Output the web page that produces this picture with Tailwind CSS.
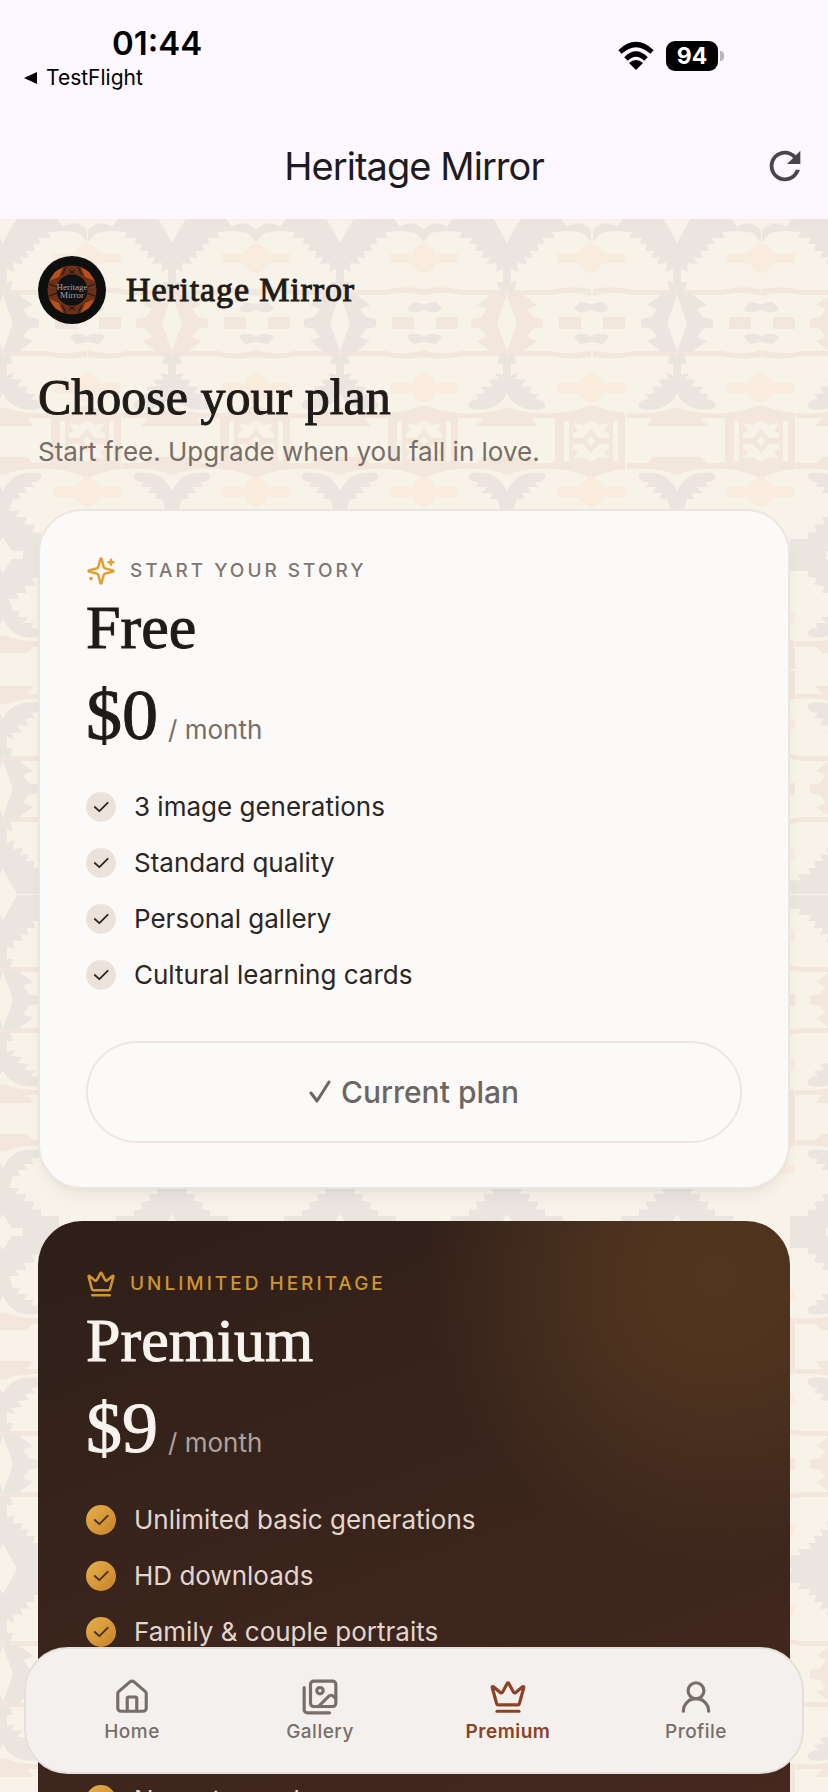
<!DOCTYPE html>
<html lang="en">
<head>
<meta charset="utf-8">
<meta name="viewport" content="width=device-width, initial-scale=1">
<title>Heritage Mirror</title>
<script src="https://cdn.jsdelivr.net/npm/@tailwindcss/browser@4"></script>
</head>
<body class="h-screen overflow-hidden bg-[#f8f3e8] font-['Inter',sans-serif] text-[#1f1b18]">
<svg class="absolute h-0 w-0" aria-hidden="true">
  <defs>
    <!-- diamond row: jagged flanks take the column's own colour -->
    <g id="flank">
      <path fill="#f3e7dd" d="M-84 27 Q-65 33 -45 28 H45 Q65 33 84 27 V34 Q65 38 45 33 H-45 Q-65 38 -84 34Z"/>
      <path fill="currentColor" d="M-15 29 L-30 18 L-20 14 L-26 6 L-36 4 L-36 0 H36 V4 L26 6 L20 14 L30 18 L15 29Z"/>
      <path fill="#f8f3e8" d="M-10 0 L0 28 L10 0Z"/>
    </g>
    <g id="medal-a">
      <path fill="#eae5df" d="M67 14 Q72 8 84 13 Q96 8 102 14 L96 21 L84 19 L73 21Z"/>
      <path fill="#f3e7dd" d="M52 0 H74 V6 H52Z M96 0 H118 V6 H96Z"/>
    </g>
    <!-- diamond row down to box row -->
    <g id="half-a">
      <use href="#flank"/>
      <use href="#medal-a"/>
      <path fill="#eae5df" d="M-5 27 L-10 41 H-4 V52 L-12 50 L-8 56 L-19 57 L-14 63 L-26 64 L-22 70 L-32 71 L-28 76 Q-40 77 -38 84 Q-36 88 -20 86 Q-5 82 0 70 Q5 82 20 86 Q36 88 38 84 Q40 77 28 76 L32 71 L22 70 L26 64 L14 63 L19 57 L8 56 L12 50 L4 52 V41 H10 L5 27 L0 34Z"/>
      <path fill="#f9ecdf" d="M50 60 H72 Q76 52 84 49 Q92 52 96 60 H118 V70 H96 Q92 78 84 80 Q76 78 72 70 H50Z"/>
      <path fill="#f3e7dd" d="M-50 90 Q-20 92 0 84 Q20 92 50 90 Q68 88 84 82 Q100 88 118 90 V118 H111 V98 H106 V118 H102 V110 L97 108 L102 100 L92 102 L84 97 L76 102 L66 100 L71 108 L66 110 V118 H62 V98 H57 V118 H48 V95 H24 L31 103 H-31 L-24 95 H-50Z"/>
      <path fill="#f3e7dd" d="M66 118 V115 H76 L84 106 L92 115 H102 V118 H88 L84 113 L80 118Z"/>
    </g>
    <!-- box row down to arrow row -->
    <g id="half-c">
      <path fill="#f3e7dd" d="M-50 28 Q-20 26 0 34 Q20 26 50 28 Q68 30 84 37 Q100 30 118 28 V0 H111 V20 H106 V0 H102 V8 L97 10 L102 18 L92 16 L84 21 L76 16 L66 18 L71 10 L66 8 V0 H62 V20 H57 V0 H48 V22 H30 L24 16 H-24 L-30 22 H-50Z"/>
      <path fill="#f3e7dd" d="M66 0 V3 H76 L84 12 L92 3 H102 V0 H88 L84 5 L80 0Z"/>
      <path fill="#eae5df" d="M0 50 Q8 34 22 32 Q40 30 38 36 Q38 41 28 41 L31 46 L20 46 L25 52 L15 52 L17 58 L10 58 L6 70 L16 70 L13 76 L24 76 L21 83 L32 84 L29 91 L38 92 V98 H56 V115 H-56 V98 H-38 V92 L-29 91 L-32 84 L-21 83 L-24 76 L-13 76 L-16 70 L-6 70 L-10 58 L-17 58 L-15 52 L-25 52 L-20 46 L-31 46 L-28 41 Q-38 41 -38 36 Q-40 30 -22 32 Q-8 34 0 50Z"/>
      <path fill="#f9ecdf" d="M50 46 H72 Q76 38 84 35 Q92 38 96 46 H118 V56 H96 Q92 64 84 66 Q76 64 72 56 H50Z"/>
      <path fill="#f8f3e8" d="M-20 115 V110 H-9 L0 96 L9 110 H20 V115Z"/>
    </g>
    <!-- diamond row down to arrow row -->
    <g id="half-b">
      <use href="#flank"/>
      <use href="#medal-a"/>
      <path fill="#f9ecdf" d="M50 60 H72 Q76 52 84 49 Q92 52 96 60 H118 V70 H96 Q92 78 84 80 Q76 78 72 70 H50Z"/>
      <path fill="#eae5df" d="M-5 27 L-10 41 H-4 V54 L-11 51 L-10 60 L-20 59 L-17 66 L-26 65 L-23 72 L-32 72 L-30 79 L-38 79 L-35 85 L-48 85 L-45 91 L-62 92 L-76 90 L-84 81 V93 Q-72 105 -60 96 L-54 105 H-14 L0 80 L14 105 H54 L60 96 Q72 105 84 93 V81 L76 90 L62 92 L45 91 L48 85 L35 85 L38 79 L30 79 L32 72 L23 72 L26 65 L17 66 L20 59 L10 60 L11 51 L4 54 V41 H10 L5 27 L0 34Z"/>
    </g>
    <g id="column">
      <use href="#half-b" transform="translate(0 104) scale(1 -1)"/>
      <use href="#half-a" transform="translate(0 104)"/>
      <use href="#half-c" transform="translate(0 222)"/>
      <use href="#half-c" transform="translate(0 450) scale(1 -1)"/>
      <use href="#half-a" transform="translate(0 570) scale(1 -1)"/>
      <use href="#half-b" transform="translate(0 570)"/>
      <use href="#half-b" transform="translate(0 781) scale(1 -1)"/>
      <use href="#half-a" transform="translate(0 781)"/>
      <use href="#half-c" transform="translate(0 899)"/>
      <use href="#half-c" transform="translate(0 1127) scale(1 -1)"/>
      <use href="#half-a" transform="translate(0 1245) scale(1 -1)"/>
      <use href="#half-b" transform="translate(0 1245)"/>
      <use href="#half-b" transform="translate(0 1455) scale(1 -1)"/>
      <use href="#half-a" transform="translate(0 1455)"/>
    </g>
    <symbol id="tick" viewBox="0 0 24 24"><path d="M20 7 10 17 4.500 12" fill="none" stroke="currentColor" stroke-width="2.200" stroke-linecap="round" stroke-linejoin="round"/></symbol>
    <symbol id="crown" viewBox="0 0 24 24"><path d="M11.562 3.266a.5.5 0 0 1 .876 0L15.390 8.870a1 1 0 0 0 1.516.294L21.183 5.500a.5.5 0 0 1 .798.519l-2.834 10.246a1 1 0 0 1-.956.734H5.810a1 1 0 0 1-.957-.734L2.020 6.020a.5.5 0 0 1 .798-.519l4.276 3.664a1 1 0 0 0 1.516-.294z M5 21h14" fill="none" stroke="currentColor" stroke-width="2" stroke-linecap="round" stroke-linejoin="round"/></symbol>
  </defs>
</svg>

<div class="flex h-full flex-col">
  <header class="bg-[#fdf7ff]">
    <div class="flex h-24 items-start justify-between pl-6 pr-[104px] pt-6 text-black">
      <div>
        <div class="pl-[88px] text-[33px]/[38px] font-semibold">01:44</div>
        <a href="#" class="flex items-center gap-2 text-[21px]/[32px]">
          <svg class="h-3.5 w-3.5" viewBox="0 0 14 14"><path d="M13 1v12L0 7z"/></svg>TestFlight</a>
      </div>
      <div class="flex items-center gap-3 pt-4">
        <svg class="h-8 w-9" viewBox="0 0 36 32" fill="none" stroke="#000" stroke-width="5"><path d="M2 12 Q18 -3 34 12"/><path d="M8 19 Q18 9 28 19"/><path d="M18 30 L11 23 Q18 17 25 23Z" fill="#000" stroke="none"/></svg>
        <div class="flex items-center gap-0.5">
          <span class="flex h-[30px] w-[52px] items-center justify-center rounded-[9px] bg-black text-[23px]/[30px] font-bold text-white">94</span>
          <span class="h-2.5 w-1 rounded-r-full bg-[#b8b4ba]"></span>
        </div>
      </div>
    </div>
    <div class="grid h-[123px] grid-cols-[1fr_auto_1fr] items-center px-6 pt-4">
      <h1 class="col-start-2 text-[38px]/[48px] tracking-tight text-[#1d1b20]">Heritage Mirror</h1>
      <button aria-label="Refresh" class="-mr-1 justify-self-end text-[#49454f]"><svg class="size-[46px]" viewBox="0 0 24 24" fill="currentColor"><path d="M17.650 6.350C16.200 4.900 14.210 4 12 4c-4.420 0-7.990 3.580-7.990 8s3.570 8 7.990 8c3.730 0 6.840-2.550 7.730-6h-2.080c-.82 2.330-3.040 4-5.650 4-3.310 0-6-2.690-6-6s2.690-6 6-6c1.660 0 3.140.69 4.220 1.780L13 11h7V4l-2.350 2.350z"/></svg></button>
    </div>
  </header>

  <main class="relative min-h-0 flex-1 overflow-hidden">
    <svg class="absolute inset-0 h-full w-full" aria-hidden="true">
      <g class="text-[#eae5df]"><use href="#column" x="-166"/><use href="#column" x="3"/><use href="#column" x="340"/><use href="#column" x="677"/></g>
      <g class="text-[#f3e7dd]"><use href="#column" x="172"/><use href="#column" x="507"/><use href="#column" x="846"/></g>
    </svg>
    <div class="relative px-[38px] pt-9">
      <div class="flex items-center gap-[18px]">
        <svg class="h-[70px] w-[70px]" viewBox="0 0 70 70">
          <circle cx="34" cy="35" r="34" fill="#0f0e0e"/>
          <circle cx="34" cy="35" r="20" fill="none" stroke="#6b3019" stroke-width="9"/>
          <g fill="#b8511d"><path d="M25 12 17 17 11 26 21 22ZM43 12 51 17 57 26 47 22ZM25 58 17 53 11 44 21 48ZM43 58 51 53 57 44 47 48Z"/></g>
          <g fill="none" stroke="#1c1210"><path d="M28 12 24 20M40 12 44 20M28 58 24 50M40 58 44 50M11 29 19 32M11 41 19 38M57 29 49 32M57 41 49 38M31 15l6 4M37 15l-6 4M31 51l6 4M37 51l-6 4"/></g>
          <circle cx="34" cy="35" r="15" fill="#0f1114"/>
          <g fill="#a5a4a8" font-family="Liberation Serif, serif" font-size="9" text-anchor="middle"><text x="34" y="35">Heritage</text><text x="34" y="43">Mirror</text></g>
        </svg>
        <span class="font-['Liberation_Serif',serif] text-[34px]/[44px] tracking-wide [-webkit-text-stroke:1px]">Heritage Mirror</span>
      </div>
      <h2 class="mt-10 font-['Liberation_Serif',serif] text-[50px]/[64px] [-webkit-text-stroke:1px]">Choose your plan</h2>
      <p class="mt-[5px] text-[26px]/[36px] text-[#776e67]">Start free. Upgrade when you fall in love.</p>

      <section class="mt-[39px] rounded-[44px] border-2 border-[#ece6e0] bg-[#fcfaf9] px-[46px] pb-11 pt-11 shadow-lg shadow-black/5">
        <div class="flex items-center gap-3.5 text-[19px]/[32px] font-medium tracking-[3px] text-[#80776f]">
          <svg class="h-[30px] w-[30px] text-[#dfa136]" viewBox="0 0 24 24" fill="none" stroke="currentColor" stroke-width="2" stroke-linecap="round" stroke-linejoin="round"><path d="M9.937 15.500A2 2 0 0 0 8.500 14.063l-6.135-1.582a.5.5 0 0 1 0-.962L8.500 9.936A2 2 0 0 0 9.937 8.500l1.582-6.135a.5.5 0 0 1 .963 0L14.063 8.500A2 2 0 0 0 15.500 9.937l6.135 1.581a.5.5 0 0 1 0 .964L15.500 14.063a2 2 0 0 0-1.437 1.437l-1.582 6.135a.5.5 0 0 1-.963 0z"/><path d="M20 3v4M22 5h-4M4 17.500v1M4.500 18h-1"/></svg>
          START YOUR STORY</div>
        <h3 class="mt-1.5 font-['Liberation_Serif',serif] text-[62px]/[68px] [-webkit-text-stroke:1px]">Free</h3>
        <p class="mt-2.5 flex items-baseline gap-2.5"><span class="font-['Liberation_Serif',serif] text-[72px]/[88px] [-webkit-text-stroke:1px]">$0</span><span class="text-[26px] text-[#776e67]">/ month</span></p>
        <ul class="mt-[30px] space-y-5 text-[26px]/[36px] text-[#2a2624]">
          <li class="flex items-center gap-[18px]"><span class="grid size-[30px] place-items-center rounded-full bg-[#ebe2da]"><svg class="size-5"><use href="#tick"/></svg></span>3 image generations</li>
          <li class="flex items-center gap-[18px]"><span class="grid size-[30px] place-items-center rounded-full bg-[#ebe2da]"><svg class="size-5"><use href="#tick"/></svg></span>Standard quality</li>
          <li class="flex items-center gap-[18px]"><span class="grid size-[30px] place-items-center rounded-full bg-[#ebe2da]"><svg class="size-5"><use href="#tick"/></svg></span>Personal gallery</li>
          <li class="flex items-center gap-[18px]"><span class="grid size-[30px] place-items-center rounded-full bg-[#ebe2da]"><svg class="size-5"><use href="#tick"/></svg></span>Cultural learning cards</li>
        </ul>
        <button class="mt-12 flex h-[102px] w-full items-center justify-center gap-2.5 rounded-full border-2 border-[#efe5e1] text-[30px] font-medium text-[#6b6662]"><svg class="h-6 w-[22px]" viewBox="0 0 22 24" fill="none" stroke="currentColor" stroke-width="3" stroke-linecap="round" stroke-linejoin="round"><path d="M2 13 8 21 20 2"/></svg>Current plan</button>
      </section>

      <section class="mt-8 rounded-[44px] bg-[radial-gradient(circle_at_90%_8%,#52361f_0,#52361fcc_110px,#52361f00_290px),linear-gradient(160deg,#2e1f19_0%,#38241c_40%,#48291f_100%)] px-12 pb-20 pt-[47px] text-[#f8f3ee]">
        <div class="flex items-center gap-3.5 text-[19px]/[32px] font-medium tracking-[3px] text-[#d0952f]">
          <svg class="size-[30px]"><use href="#crown"/></svg>UNLIMITED HERITAGE</div>
        <h3 class="mt-1.5 font-['Liberation_Serif',serif] text-[62px]/[68px] [-webkit-text-stroke:1px]">Premium</h3>
        <p class="mt-2.5 flex items-baseline gap-2.5"><span class="font-['Liberation_Serif',serif] text-[72px]/[88px] [-webkit-text-stroke:1px]">$9</span><span class="text-[26px] text-[#aea29b]">/ month</span></p>
        <ul class="mt-[30px] space-y-5 text-[26px]/[36px] text-[#e2d7ce]">
          <li class="flex items-center gap-[18px]"><span class="grid size-[30px] place-items-center rounded-full bg-linear-to-br from-[#e8b04a] to-[#c5832a] text-[#4a2c18]"><svg class="size-5"><use href="#tick"/></svg></span>Unlimited basic generations</li>
          <li class="flex items-center gap-[18px]"><span class="grid size-[30px] place-items-center rounded-full bg-linear-to-br from-[#e8b04a] to-[#c5832a] text-[#4a2c18]"><svg class="size-5"><use href="#tick"/></svg></span>HD downloads</li>
          <li class="flex items-center gap-[18px]"><span class="grid size-[30px] place-items-center rounded-full bg-linear-to-br from-[#e8b04a] to-[#c5832a] text-[#4a2c18]"><svg class="size-5"><use href="#tick"/></svg></span>Family &amp; couple portraits</li>
          <li class="flex items-center gap-[18px]"><span class="grid size-[30px] place-items-center rounded-full bg-linear-to-br from-[#e8b04a] to-[#c5832a] text-[#4a2c18]"><svg class="size-5"><use href="#tick"/></svg></span>Premium styles</li>
          <li class="flex items-center gap-[18px]"><span class="grid size-[30px] place-items-center rounded-full bg-linear-to-br from-[#e8b04a] to-[#c5832a] text-[#4a2c18]"><svg class="size-5"><use href="#tick"/></svg></span>Video stories</li>
          <li class="flex items-center gap-[18px]"><span class="grid size-[30px] place-items-center rounded-full bg-linear-to-br from-[#e8b04a] to-[#c5832a] text-[#4a2c18]"><svg class="size-5"><use href="#tick"/></svg></span>No watermark</li>
        </ul>
      </section>
    </div>
  </main>
</div>

<nav class="fixed inset-x-6 bottom-[18px] grid h-[127px] grid-cols-4 items-center rounded-[44px] border-2 border-[#e6dfda] bg-[#f3f0ee] px-3 text-[19px]/[24px] font-medium tracking-wide text-[#776e69]">
  <a href="#" class="flex flex-col items-center gap-1"><svg class="size-[38px]" viewBox="0 0 24 24" fill="none" stroke="currentColor" stroke-width="2" stroke-linecap="round" stroke-linejoin="round"><path d="M15 21v-8a1 1 0 0 0-1-1h-4a1 1 0 0 0-1 1v8"/><path d="M3 10a2 2 0 0 1 .709-1.528l7-5.999a2 2 0 0 1 2.582 0l7 5.999A2 2 0 0 1 21 10v9a2 2 0 0 1-2 2H5a2 2 0 0 1-2-2z"/></svg>Home</a>
  <a href="#" class="flex flex-col items-center gap-1"><svg class="size-[38px]" viewBox="0 0 24 24" fill="none" stroke="currentColor" stroke-width="2" stroke-linecap="round" stroke-linejoin="round"><path d="M18 22H4a2 2 0 0 1-2-2V6"/><path d="m22 13-1.296-1.296a2.410 2.410 0 0 0-3.408 0L11 18"/><circle cx="12" cy="8" r="2"/><rect x="6" y="2" width="16" height="16" rx="2"/></svg>Gallery</a>
  <a href="#" class="flex flex-col items-center gap-1 font-semibold text-[#8b4226]"><svg class="size-[38px]"><use href="#crown"/></svg>Premium</a>
  <a href="#" class="flex flex-col items-center gap-1"><svg class="size-[38px]" viewBox="0 0 24 24" fill="none" stroke="currentColor" stroke-width="2" stroke-linecap="round" stroke-linejoin="round"><circle cx="12" cy="8" r="5"/><path d="M20 21a8 8 0 0 0-16 0"/></svg>Profile</a>
</nav>
</body>
</html>
